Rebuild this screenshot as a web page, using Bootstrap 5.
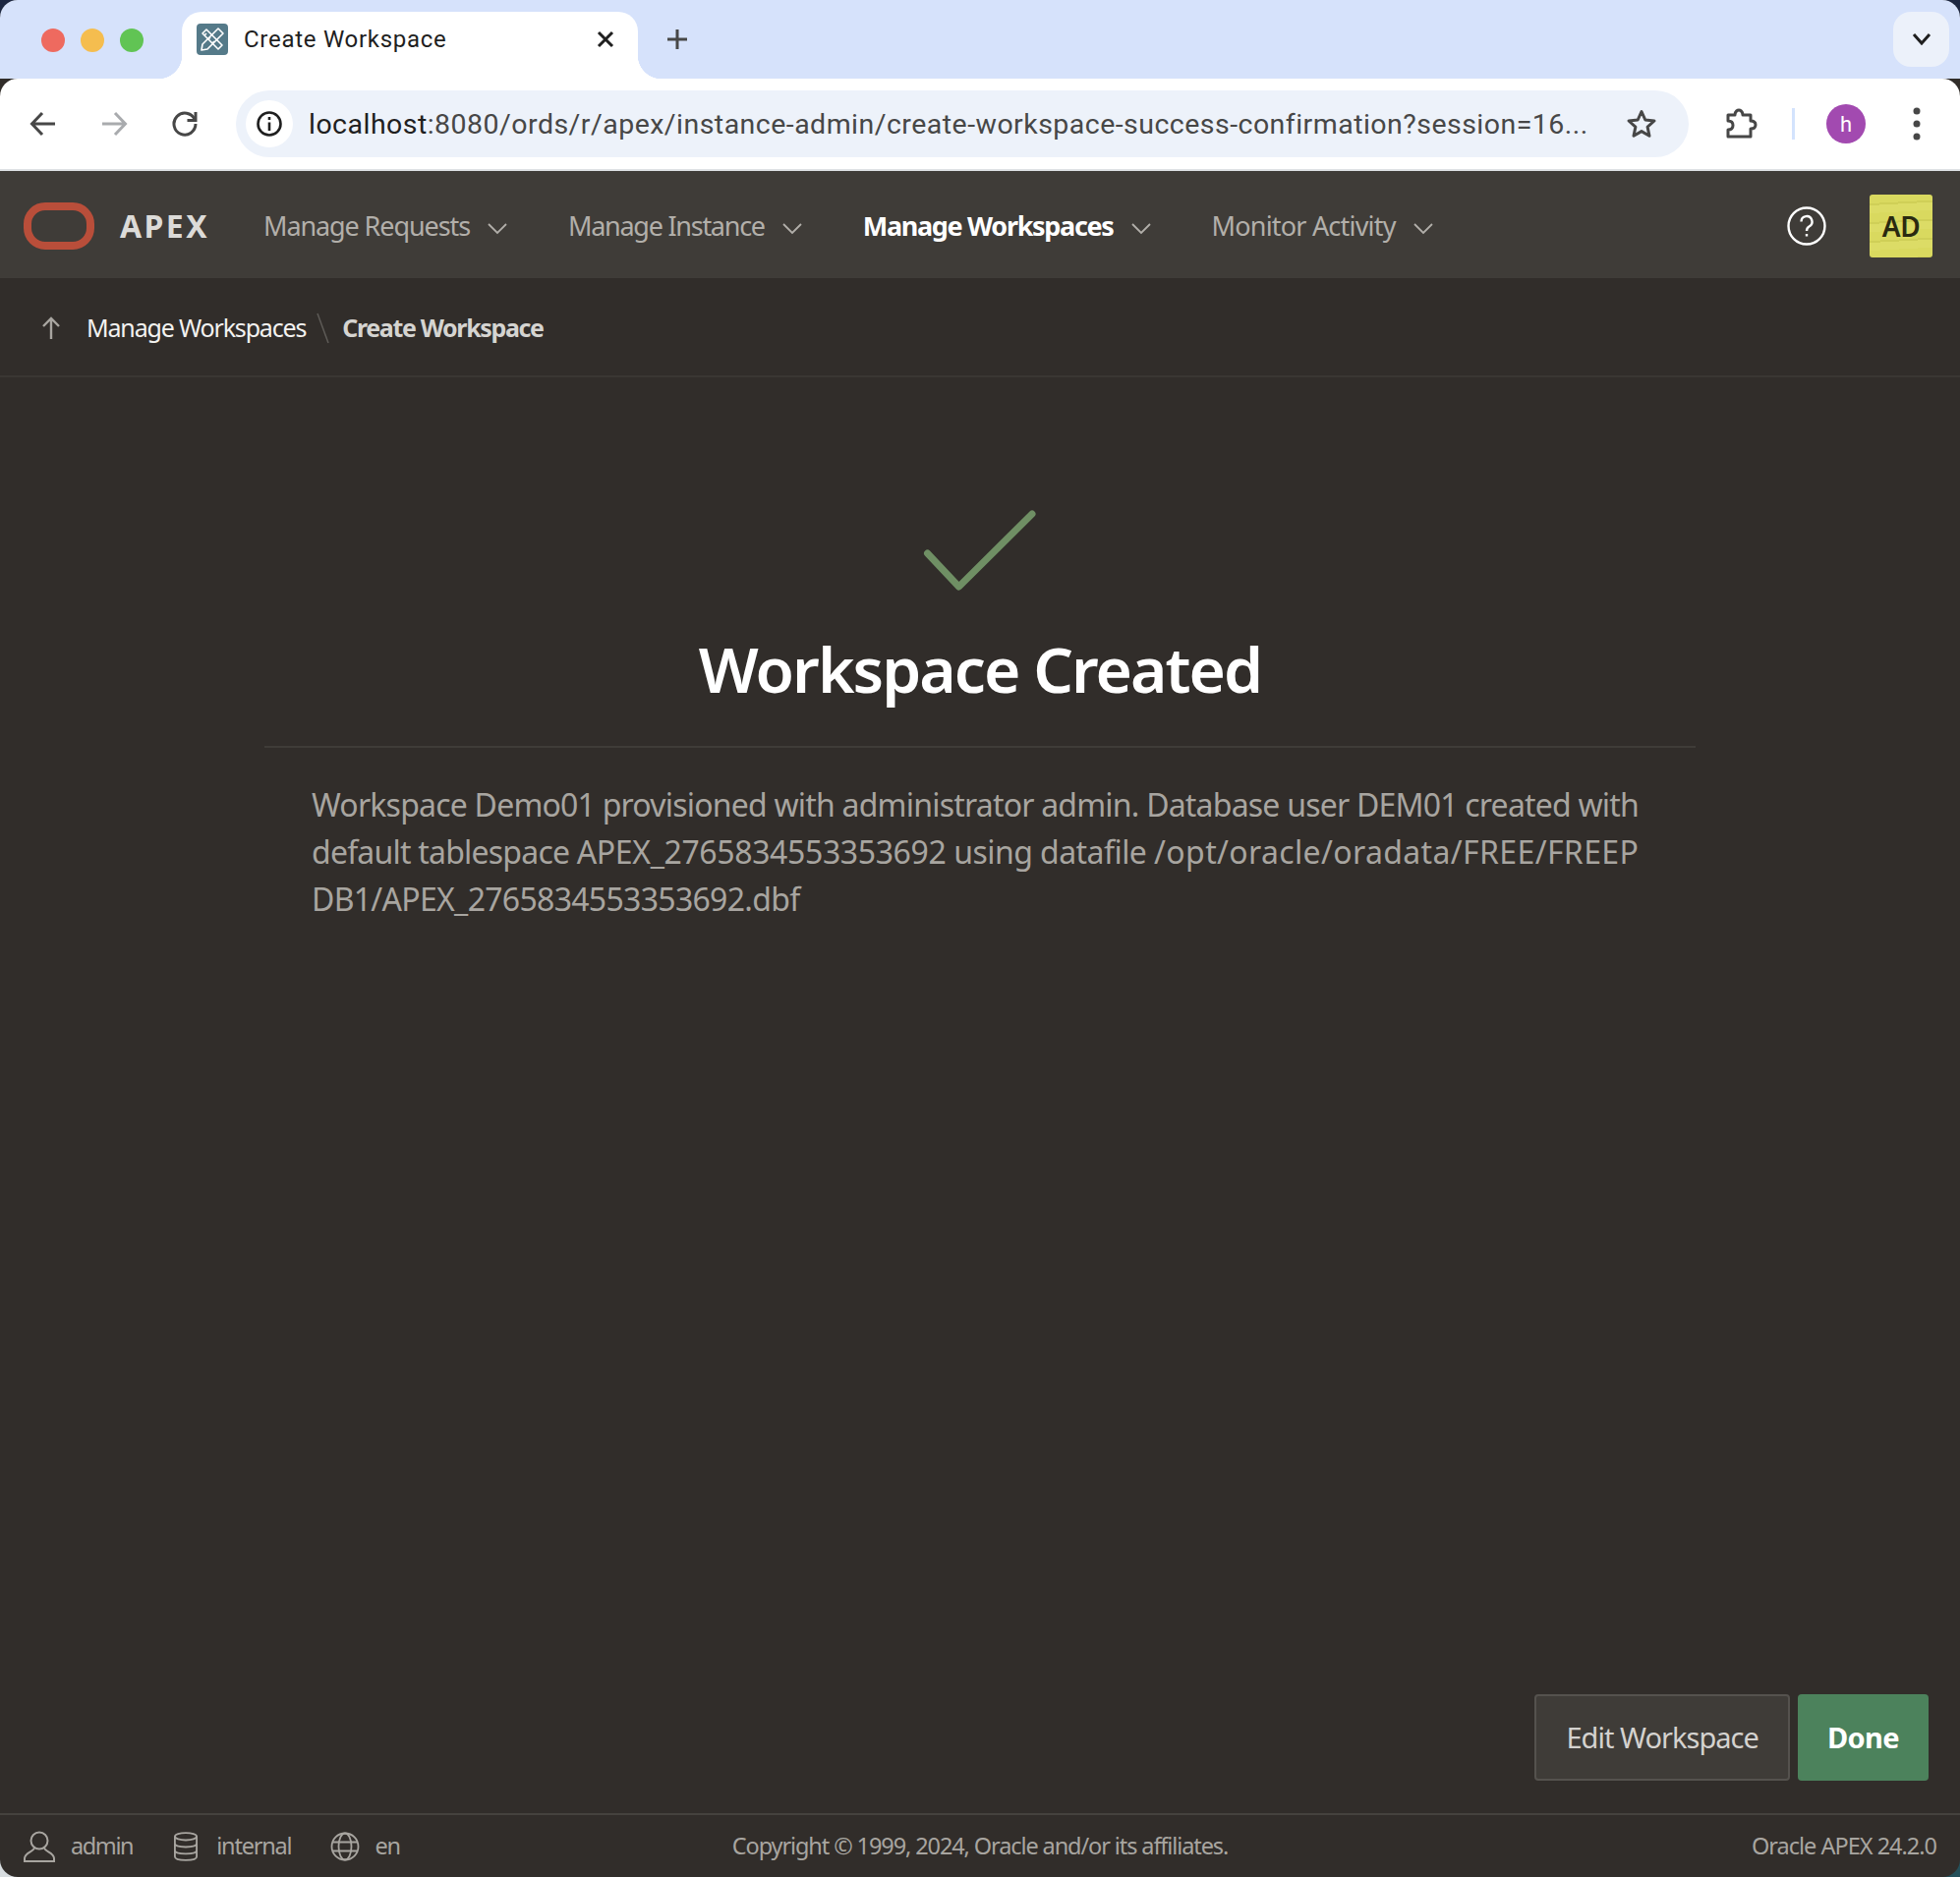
<!DOCTYPE html>
<html lang="en">
<head>
  <meta charset="UTF-8">
  <meta name="viewport" content="width=device-width, initial-scale=1.0">
  <title>Create Workspace</title>
  <link rel="stylesheet" href="https://cdn.jsdelivr.net/npm/bootstrap@5.3.3/dist/css/bootstrap.min.css">
  <style>
    html, body { height: 100%; }
    body { background: linear-gradient(#d8dde0, #d8dde0) left bottom / 50% 50% no-repeat, linear-gradient(#24505a, #24505a) right bottom / 50% 50% no-repeat, #1c2742; font-family: "Noto Sans", sans-serif; overflow: hidden; }
    .win { height: 1910px; border-radius: 18px; overflow: hidden; background: #312d2a; }
    .tabstrip { height: 80px; background: #d6e2fb; flex: none; }
    .lights { width: 185px; padding: 2px 0 0 42px; gap: 16px; }
    .light { width: 24px; height: 24px; border-radius: 50%; }
    .chrome-tab { width: 464px; height: 68px; margin-top: 12px; background: #fff; border-radius: 20px 20px 0 0; padding: 0 23px 12px 15px; position: relative; }
    .chrome-tab::before, .chrome-tab::after { content: ""; position: absolute; bottom: 0; width: 24px; height: 24px; background: radial-gradient(circle at 0 0, #d6e2fb 24px, #fff 24.5px); }
    .chrome-tab::before { left: -24px; }
    .chrome-tab::after { right: -24px; background: radial-gradient(circle at 100% 0, #d6e2fb 24px, #fff 24.5px); }
    .favicon { width: 32px; height: 32px; border-radius: 4px; background: #557a89; flex: none; }
    .tab-title { margin-left: 16px; font: 24px "Roboto", sans-serif; letter-spacing: .72px; color: #1f1f1f; }
    .tab-plus { margin-left: 24px; width: 32px; }
    .tab-expand { width: 57px; height: 56px; background: #ecf1fa; border-radius: 18px; margin: 12px 11px 0 0; }
    .toolbar { height: 94px; background: #fff; border-bottom: 2px solid #dee1e4; border-radius: 18px 18px 0 0; flex: none; }
    .tool-ic { width: 72px; flex: none; }
    .omnibox { width: 1478px; height: 68px; border-radius: 34px; background: #edf2fa; margin-left: 16px; padding: 0 32px 0 10px; flex: none; }
    .info-pill { width: 48px; height: 48px; border-radius: 50%; background: #fff; flex: none; }
    .url { margin-left: 16px; font: 28.5px "Roboto", sans-serif; letter-spacing: .47px; color: #474747; white-space: nowrap; }
    .url b { font-weight: 400; color: #1f1f1f; }
    .ext-ic { margin-left: 18px; }
    .sep { width: 3px; height: 32px; background: #d3e3fd; margin: 0 32px 0 15px; }
    .profile { width: 40px; height: 40px; border-radius: 50%; background: #a24ab0; color: #fff; font: 22px "Roboto", sans-serif; }

    .apx-head { height: 109px; background: #3f3c38; flex: none; padding-top: 2px; }
    .logo-ring { width: 72px; height: 48px; border: 8px solid #b94e3a; border-radius: 22px; margin-left: 24px; flex: none; }
    .brand { margin-left: 26px; width: 146px; font-size: 32px; font-weight: 700; letter-spacing: 2.4px; color: #dcdbd8; }
    .menu-item { color: #b2afaa; font-size: 27px; letter-spacing: -1.1px; white-space: nowrap; padding-top: 2px; }
    .menu-item.tight { letter-spacing: -1.27px; }
    .menu-item.on { color: #fff; font-weight: 700; letter-spacing: -1.32px; }
    .menu-item.last { letter-spacing: -.8px; }
    .menu-item svg { margin-left: 18px; margin-right: 62px; }
    .help-ic { margin-right: 44px; }
    .av-badge { width: 64px; height: 64px; border-radius: 3px; background: repeating-linear-gradient(177deg, #d9d95f 0 9px, #cfcf57 9px 11px, #dcdc66 11px 19px); color: #2a2a10; font-size: 28px; font-weight: 600; margin-right: 28px; letter-spacing: -.4px; }

    .crumbs { height: 101px; border-bottom: 2px solid #3a3733; flex: none; padding: 2px 0 0 42px; color: #f3f2f0; font-size: 25px; letter-spacing: -1.17px; }
    .crumbs svg.up { margin-right: 26px; }
    .crumbs .cur { color: #d5d4d1; font-weight: 700; letter-spacing: -1.35px; }
    .crumbs .slash { margin: 0 11px 0 10px; }

    .success { margin-top: 134px; }
    .success h1 { margin: 38px 0 0; font-size: 64px; line-height: 82px; font-weight: 600; color: #fff; letter-spacing: -1.95px; }
    .rule { width: 1456px; height: 2px; background: #3f3c38; margin: 37px auto 0; }
    .msg { width: 1360px; margin: 34px auto 0; font-size: 32px; line-height: 48px; color: #a8a5a0; }
    .msg-a { letter-spacing: -.79px; }
    .msg-c { letter-spacing: -.7px; }
    .msg-id { letter-spacing: -.37px; }
    .msg-mid { letter-spacing: -.55px; }
    .msg-path { letter-spacing: .36px; }

    .page-acts { margin-top: auto; padding: 0 32px 33px 0; gap: 8px; }
    .page-acts .btn { height: 88px; font-size: 29px; border-radius: 4px; padding: 0 30px; }
    .act-edit { background: #3f3c38; border: 2px solid #55524e; color: #d4d2cf; letter-spacing: -.98px; }
    .act-done { background: #4c825c; border: 0; color: #fff; font-weight: 700; letter-spacing: -.6px; }

    .apx-foot { height: 65px; border-top: 2px solid #45423e; flex: none; padding: 0 24px; color: #a8a5a0; font-size: 23.5px; letter-spacing: -1px; position: relative; }
    .foot-i { margin-right: 40px; letter-spacing: -1.2px; }
    .foot-i:first-child { margin-right: 42px; letter-spacing: -1.4px; }
    .ic-user { margin-right: 16px; }
    .ic-db { margin-right: 19px; }
    .ic-globe { margin-right: 15px; }
    .copy { position: absolute; left: 0; right: 0; text-align: center; letter-spacing: -1.1px; }
  </style>
</head>
<body>
  <div class="win d-flex flex-column">
    <div class="tabstrip d-flex align-items-start">
      <div class="lights d-flex align-items-center h-100 flex-none">
        <span class="light" style="background:#ee6a5f"></span>
        <span class="light" style="background:#f5bd4f"></span>
        <span class="light" style="background:#61c454"></span>
      </div>
      <div class="chrome-tab d-flex align-items-center">
        <span class="favicon d-flex align-items-center justify-content-center">
          <svg width="28" height="28" viewBox="0 0 28 28" fill="none" stroke="#fff" stroke-width="1.6" stroke-linejoin="round"><path d="M4 8 8 4 24 20 20 24Z"/><path d="M6 10l2-2M10 14l2-2M14 18l2-2"/><path d="M20 3l5 5L9 24l-6 1 1-6Z"/></svg>
        </span>
        <span class="tab-title flex-grow-1">Create Workspace</span>
        <svg width="20" height="20" viewBox="0 0 20 20" stroke="#1f1f1f" stroke-width="3"><path d="M3 3 17 17M17 3 3 17"/></svg>
      </div>
      <div class="tab-plus d-flex align-items-center justify-content-center h-100">
        <svg width="24" height="24" viewBox="0 0 24 24" stroke="#474747" stroke-width="3"><path d="M12 2V22M2 12H22"/></svg>
      </div>
      <div class="flex-grow-1"></div>
      <div class="tab-expand d-flex align-items-center justify-content-center">
        <svg width="20" height="14" viewBox="0 0 20 14" fill="none" stroke="#1f1f1f" stroke-width="3"><path d="M2 2l8 9 8-9"/></svg>
      </div>
    </div>
    <div class="toolbar d-flex align-items-center ps-2">
      <div class="tool-ic d-flex justify-content-center">
        <svg width="28" height="28" viewBox="0 0 28 28" fill="none" stroke="#474747" stroke-width="3"><path d="M26 14H3M13 3 2.5 14 13 25"/></svg>
      </div>
      <div class="tool-ic d-flex justify-content-center">
        <svg width="28" height="28" viewBox="0 0 28 28" fill="none" stroke="#a9abae" stroke-width="3"><path d="M2 14H25M15 3 25.5 14 15 25"/></svg>
      </div>
      <div class="tool-ic d-flex justify-content-center">
        <svg width="28" height="28" viewBox="0 0 28 28" fill="none" stroke="#474747" stroke-width="3"><path d="M24 9.5A11 11 0 1 0 25 14"/><path d="M25 2V10.5H16.5"/></svg>
      </div>
      <div class="omnibox d-flex align-items-center">
        <span class="info-pill d-flex align-items-center justify-content-center">
          <svg width="28" height="28" viewBox="0 0 28 28" fill="none" stroke="#1f1f1f" stroke-width="2.6"><circle cx="14" cy="14" r="11.5"/><path d="M14 12.5V21M14 7V10"/></svg>
        </span>
        <span class="url"><b>localhost</b>:8080/ords/r/apex/instance-admin/create-workspace-success-confirmation?session=16...</span>
        <svg class="ms-auto" width="32" height="32" viewBox="0 0 32 32" fill="none" stroke="#474747" stroke-width="3" stroke-linejoin="round"><path d="M16 3.5 19.8 12l9.2 1-6.900 6.100L24 28.300 16 23.600 8 28.300l1.900-9.200L3 13l9.200-1Z"/></svg>
      </div>
      <div class="tool-ic ext-ic d-flex justify-content-center">
        <svg width="34" height="32" viewBox="0 0 34 32" fill="none" stroke="#474747" stroke-width="3" stroke-linejoin="round"><path d="M3 7H10C10 3 13 2 14 2S18 3 18 7H26V13C30 13 31 15 31 17S30 21 26 21V29H3V22C7 22 8 20 8 17.500S7 13 3 13Z"/></svg>
      </div>
      <span class="sep"></span>
      <span class="profile d-flex align-items-center justify-content-center">h</span>
      <div class="tool-ic d-flex justify-content-center ms-auto me-2">
        <svg width="8" height="34" viewBox="0 0 8 34" fill="#474747"><circle cx="4" cy="4" r="3.500"/><circle cx="4" cy="17" r="3.500"/><circle cx="4" cy="30" r="3.500"/></svg>
      </div>
    </div>

    <header class="apx-head d-flex align-items-center">
      <span class="logo-ring"></span>
      <span class="brand">APEX</span>
      <a class="menu-item text-decoration-none" href="#">Manage Requests<svg width="20" height="12" viewBox="0 0 20 12" fill="none" stroke="#b2afaa" stroke-width="1.800"><path d="M1 1l9 9 9-9"/></svg></a>
      <a class="menu-item tight text-decoration-none" href="#">Manage Instance<svg width="20" height="12" viewBox="0 0 20 12" fill="none" stroke="#b2afaa" stroke-width="1.800"><path d="M1 1l9 9 9-9"/></svg></a>
      <a class="menu-item on text-decoration-none" href="#">Manage Workspaces<svg width="20" height="12" viewBox="0 0 20 12" fill="none" stroke="#b2afaa" stroke-width="1.800"><path d="M1 1l9 9 9-9"/></svg></a>
      <a class="menu-item last text-decoration-none" href="#">Monitor Activity<svg width="20" height="12" viewBox="0 0 20 12" fill="none" stroke="#b2afaa" stroke-width="1.800"><path d="M1 1l9 9 9-9"/></svg></a>
      <svg class="help-ic ms-auto" width="40" height="40" viewBox="0 0 40 40" fill="none" stroke="#fff" stroke-width="2.400"><circle cx="20" cy="20" r="18.500"/><path d="M14.500 15.500A5.500 5.500 0 1 1 22.500 20.500C20.800 21.500 20 22.500 20 25"/><path d="M20 28V30.500"/></svg>
      <span class="av-badge d-flex align-items-center justify-content-center">AD</span>
    </header>

    <div class="crumbs d-flex align-items-center">
      <svg class="up" width="20" height="24" viewBox="0 0 20 24" fill="none" stroke="#a8a5a0" stroke-width="2.400"><path d="M10 23V2M2 10l8-8 8 8"/></svg>
      <span>Manage Workspaces</span>
      <svg class="slash" width="16" height="32" viewBox="0 0 16 32" stroke="#5e5b57" stroke-width="1.500"><path d="M2 1l11 30"/></svg>
      <span class="cur">Create Workspace</span>
    </div>

    <main class="d-flex flex-column flex-grow-1">
      <div class="success text-center">
        <svg class="d-block mx-auto" width="116" height="84" viewBox="0 0 116 84" fill="none" stroke="#6f8f64" stroke-width="7" stroke-linecap="round" stroke-linejoin="round"><path d="M4.500 45 36.500 79 111 5"/></svg>
        <h1>Workspace Created</h1>
      </div>
      <div class="rule"></div>
      <p class="msg">
        <span class="msg-a">Workspace Demo01 provisioned with administrator admin. Database user DEM01 created with</span><br>
        <span class="msg-a">default tablespace </span><span class="msg-id">APEX_2765834553353692</span><span class="msg-mid"> using datafile </span><span class="msg-path">/opt/oracle/oradata/FREE/FREEP</span><br>
        <span class="msg-c">DB1/APEX_2765834553353692.dbf</span>
      </p>
      <div class="page-acts d-flex justify-content-end">
        <button type="button" class="btn act-edit">Edit Workspace</button>
        <button type="button" class="btn act-done">Done</button>
      </div>
    </main>

    <footer class="apx-foot d-flex align-items-center">
      <span class="foot-i d-flex align-items-center">
        <svg class="ic-user" width="32" height="32" viewBox="0 0 32 32" fill="none" stroke="#a8a5a0" stroke-width="2"><circle cx="16" cy="10" r="8.500"/><path d="M11 17C11 21 1 22 1 28V31H31V28C31 22 21 21 21 17"/></svg>admin
      </span>
      <span class="foot-i d-flex align-items-center">
        <svg class="ic-db" width="24" height="32" viewBox="0 0 26 32" fill="none" stroke="#a8a5a0" stroke-width="2"><ellipse cx="13" cy="5" rx="12" ry="4"/><path d="M1 5V27C1 29.500 6 31 13 31S25 29.500 25 27V5M1 12.500C1 15 6 16.500 13 16.500S25 15 25 12.500M1 20C1 22.500 6 24 13 24S25 22.500 25 20"/></svg>internal
      </span>
      <span class="foot-i d-flex align-items-center">
        <svg class="ic-globe" width="30" height="30" viewBox="0 0 30 30" fill="none" stroke="#a8a5a0" stroke-width="1.800"><circle cx="15" cy="15" r="13.500"/><ellipse cx="15" cy="15" rx="6.500" ry="13.500"/><path d="M2 10.500H28M2 19.500H28"/></svg>en
      </span>
      <span class="copy">Copyright © 1999, 2024, Oracle and/or its affiliates.</span>
      <span class="ms-auto">Oracle APEX 24.2.0</span>
    </footer>
  </div>
  <script src="https://cdn.jsdelivr.net/npm/bootstrap@5.3.3/dist/js/bootstrap.bundle.min.js"></script>
</body>
</html>
